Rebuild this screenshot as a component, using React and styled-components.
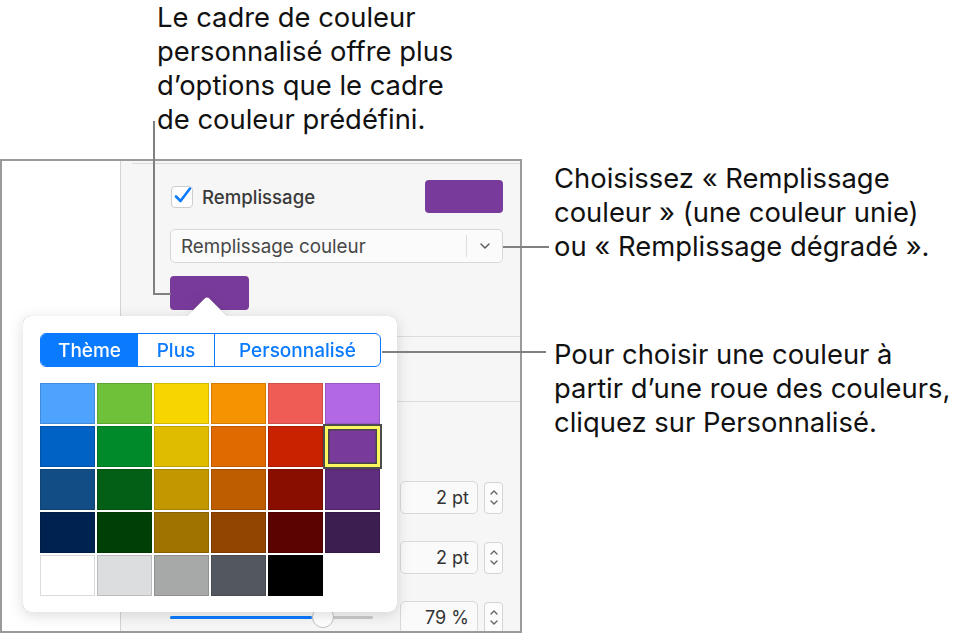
import React from 'react';
import styled, { createGlobalStyle, css } from 'styled-components';

const blue = '#0a7aff';
const purple = '#793b9b';

const GlobalStyle = createGlobalStyle`
html, body {
    margin: 0;
    padding: 0;
    background: #fff;
}
body {
    font-family: Inter, "Noto Sans", sans-serif;
    -webkit-font-smoothing: antialiased;
}
`;

const Page = styled.div`
position: relative;
width: 958px;
height: 633px;
display: flex;
overflow: hidden;
`;

const LeftCol = styled.div`
width: 522px;
flex: none;
display: flex;
flex-direction: column;
`;

const Note = styled.div`
font-size: 27.4px;
line-height: 34px;
color: #111;
white-space: nowrap;
`;

const TopNote = styled(Note)`
height: 159px;
padding-left: 157px;
`;

const RightCol = styled.div`
flex: 1;
padding: 161px 0 0 32px;
display: flex;
flex-direction: column;
gap: 74px;
`;

const Frame = styled.div`
height: 474px;
box-sizing: border-box;
border: 2px solid #9a9a9a;
display: flex;
overflow: hidden;
`;

const Blank = styled.div`
width: 118px;
flex: none;
background: #fff;
`;

const Sidebar = styled.div`
flex: 1;
background: #f6f6f6;
border-left: 1px solid #d4d4d4;
padding: 0 17px 0 11px;
display: flex;
flex-direction: column;
`;

const Rule = styled.div`
margin-top: ${props => props.$top}px;
margin-right: -17px;
height: 1px;
background: #dcdcdc;
flex: none;
`;

const Section = styled.div`
padding-left: 38px;
display: flex;
flex-direction: column;
`;

const FillRow = styled.div`
margin-top: 16px;
height: 33px;
display: flex;
align-items: center;
`;

const CheckBox = styled.div`
width: 20px;
height: 20px;
margin-left: 1px;
border: 1px solid #cdcdcd;
border-radius: 4px;
background: #fff;
position: relative;

svg {
    position: absolute;
    left: 1px;
    top: -3px;
}
`;

const Label = styled.span`
margin-left: 9px;
font-size: 18.6px;
font-weight: 500;
color: #3a3a3a;
`;

const ColorWell = styled.div`
width: ${props => props.$small ? 79 : 78}px;
height: ${props => props.$small ? 34 : 33}px;
border-radius: 4px;
background: ${purple};
margin-left: ${props => props.$small ? 0 : 'auto'};
margin-top: ${props => props.$small ? 13 : 0}px;
`;

const Select = styled.div`
margin-top: 16px;
height: 34px;
box-sizing: border-box;
border: 1px solid #d8d8d8;
border-radius: 5px;
background: #fbfbfb;
display: flex;
align-items: center;
font-size: 18.8px;
color: #474747;
`;

const SelectText = styled.span`
padding-left: 10px;
flex: 1;
`;

const SelectArrow = styled.div`
width: 35px;
height: 22px;
border-left: 1px solid #dedede;
display: flex;
align-items: center;
justify-content: center;
`;

const StepRow = styled.div`
margin-top: ${props => props.$top}px;
height: 33px;
flex: none;
display: flex;
align-items: center;
justify-content: flex-end;
gap: 6px;
`;

const Field = styled.div`
width: 78px;
height: 33px;
box-sizing: border-box;
border: 1px solid #d9d9d9;
border-radius: 5px;
background: #fafafa;
display: flex;
align-items: center;
justify-content: flex-end;
padding-right: 8px;
font-size: 18px;
color: #333;
`;

const Stepper = styled.div`
width: 19px;
height: 32px;
box-sizing: border-box;
border: 1px solid #d4d4d4;
border-radius: 4px;
background: #fcfcfc;
display: flex;
flex-direction: column;
align-items: center;
justify-content: center;
gap: 5px;
`;

const Slider = styled.div`
position: relative;
width: 203px;
height: 3px;
margin-right: auto;
border-radius: 2px;
background: #cacaca;
`;

const SliderFill = styled.div`
height: 100%;
border-radius: 2px;
background: ${blue};
`;

const Knob = styled.div`
position: absolute;
top: -10px;
width: 22px;
height: 22px;
box-sizing: border-box;
border-radius: 50%;
border: 1px solid #c2c2c2;
background: #fff;
`;

const Popover = styled.div`
position: absolute;
left: 23px;
top: 316px;
width: 374px;
height: 296px;
filter: drop-shadow(0 0 0.6px rgba(0, 0, 0, 0.35)) drop-shadow(0 3px 7px rgba(0, 0, 0, 0.14));
`;

const PopBody = styled.div`
position: relative;
height: 100%;
box-sizing: border-box;
background: #fff;
border-radius: 8px;
padding: 17px 16px 16px 17px;
display: flex;
flex-direction: column;
gap: 16px;

&::before {
    content: '';
    position: absolute;
    left: 170px;
    top: -14px;
    width: 28px;
    height: 28px;
    background: #fff;
    border-radius: 4px 0 0 0;
    transform: rotate(45deg);
}
`;

const Segmented = styled.div`
position: relative;
height: 34px;
box-sizing: border-box;
border: 1.5px solid ${blue};
border-radius: 6px;
overflow: hidden;
display: grid;
grid-template-columns: 97px 76px 1fr;
`;

const Segment = styled.div`
display: flex;
align-items: center;
justify-content: center;
font-size: 19px;
font-weight: 500;
color: ${blue};
${props => props.$active && css`
    background: ${blue};
    color: #fff;
`}
${props => props.$divider && css`
    border-left: 1.5px solid ${blue};
`}
`;

const Swatches = styled.div`
display: grid;
grid-template-columns: repeat(6, 55px);
grid-auto-rows: 41px;
gap: 2px;
`;

const Swatch = styled.div`
background: ${props => props.$color};
box-shadow: inset 0 0 0 1px rgba(0, 0, 0, 0.14);
${props => props.$selected && css`
    box-shadow: 0 0 0 2px #4d4d4d, inset 0 0 0 3px #fdf860, inset 0 0 0 4.5px #464646;
    position: relative;
    z-index: 1;
`}
`;

const Leaders = styled.svg`
position: absolute;
left: 0;
top: 0;
pointer-events: none;
`;

const palette = [
    ['#4da3fd', '#6fc13a', '#f7d600', '#f59300', '#ef5c55', '#b368e3'],
    ['#0062c4', '#008a29', '#e0bc00', '#e06900', '#c82200', purple],
    ['#134d86', '#035f15', '#c39700', '#bd5d00', '#8a0e00', '#5f2e7e'],
    ['#002251', '#003f05', '#a07200', '#924500', '#5a0300', '#3c1e50'],
    ['#ffffff', '#dcdddf', '#a6a9a8', '#53575f', '#000000'],
];

const Chevron = ({ up, w = 10, h = 6, color = '#555' }) => (
    <svg width={w} height={h} viewBox={`0 0 ${w} ${h}`}>
        <path
            d={up ? `M1 ${h - 1} L${w / 2} 1 L${w - 1} ${h - 1}` : `M1 1 L${w / 2} ${h - 1} L${w - 1} 1`}
            fill="none"
            stroke={color}
            strokeWidth="1.4"
            strokeLinecap="round"
            strokeLinejoin="round"
        />
    </svg>
);

const StepField = ({ value, top, children }) => (
    <StepRow $top={top}>
        {children}
        <Field>{value}</Field>
        <Stepper>
            <Chevron up w={8} h={5} color="#666" />
            <Chevron w={8} h={5} color="#666" />
        </Stepper>
    </StepRow>
);

const App = () => {
    return (
        <>
        <GlobalStyle />
        <Page>
            <LeftCol>
                <TopNote>
                    Le cadre de couleur<br />
                    personnalisé offre plus<br />
                    d’options que le cadre<br />
                    de couleur prédéfini.
                </TopNote>
                <Frame>
                    <Blank />
                    <Sidebar>
                        <Rule $top={2} />
                        <Section>
                            <FillRow>
                                <CheckBox>
                                    <svg width="20" height="22" viewBox="0 0 20 22">
                                        <path d="M3 12.5 L7.5 17 L17 4.5" fill="none" stroke={blue} strokeWidth="2.6" strokeLinecap="round" strokeLinejoin="round" />
                                    </svg>
                                </CheckBox>
                                <Label>Remplissage</Label>
                                <ColorWell />
                            </FillRow>
                            <Select>
                                <SelectText>Remplissage couleur</SelectText>
                                <SelectArrow>
                                    <Chevron />
                                </SelectArrow>
                            </Select>
                            <ColorWell $small />
                        </Section>
                        <Rule $top={26} />
                        <Rule $top={64} />
                        <Section>
                            <StepField value="2 pt" top={79} />
                            <StepField value="2 pt" top={27} />
                            <StepField value="79 %" top={27}>
                                <Slider>
                                    <SliderFill style={{ width: 142 }} />
                                    <Knob style={{ left: 142 }} />
                                </Slider>
                            </StepField>
                        </Section>
                    </Sidebar>
                </Frame>
            </LeftCol>
            <RightCol>
                <Note>
                    Choisissez « Remplissage<br />
                    couleur » (une couleur unie)<br />
                    ou « Remplissage dégradé ».
                </Note>
                <Note>
                    Pour choisir une couleur à<br />
                    partir d’une roue des couleurs,<br />
                    cliquez sur Personnalisé.
                </Note>
            </RightCol>

            <Popover>
                <PopBody>
                    <Segmented>
                        <Segment $active>Thème</Segment>
                        <Segment>Plus</Segment>
                        <Segment $divider>Personnalisé</Segment>
                    </Segmented>
                    <Swatches>
                        {palette.map((row, r) => row.map((c, i) => (
                            <Swatch key={`${r}-${i}`} $color={c} $selected={r === 1 && i === 5} />
                        )))}
                    </Swatches>
                </PopBody>
            </Popover>

            <Leaders width="958" height="633" viewBox="0 0 958 633">
                <g fill="none" stroke="#808080" strokeWidth="2">
                    <path d="M154 121 V294 H171" />
                    <path d="M503 247 H549" />
                    <path d="M382 352 H546" />
                </g>
            </Leaders>
        </Page>
        </>
    );
};

export default App;
